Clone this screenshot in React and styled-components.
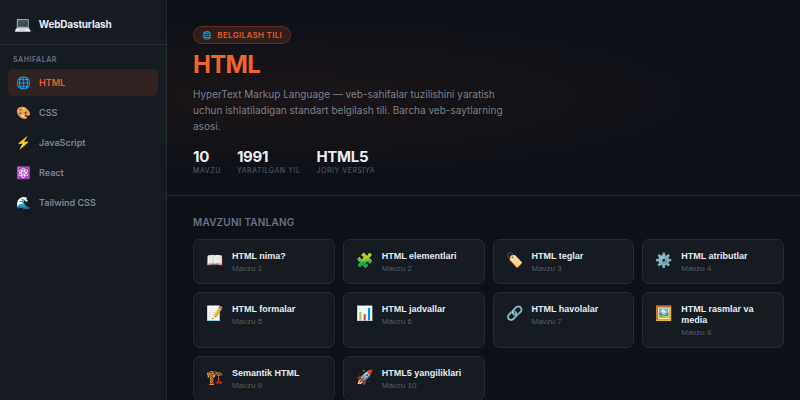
import { useState } from "react";
import styled, { createGlobalStyle } from "styled-components";

const pages = [
    { name: "HTML", icon: "🌐" },
    { name: "CSS", icon: "🎨" },
    { name: "JavaScript", icon: "⚡" },
    { name: "React", icon: "⚛️" },
    { name: "Tailwind CSS", icon: "🌊" },
];

const stats = [
    { value: "10", label: "Mavzu" },
    { value: "1991", label: "Yaratilgan yil" },
    { value: "HTML5", label: "Joriy versiya" },
];

const topics = [
    { title: "HTML nima?", icon: "📖" },
    { title: "HTML elementlari", icon: "🧩" },
    { title: "HTML teglar", icon: "🏷️" },
    { title: "HTML atributlar", icon: "⚙️" },
    { title: "HTML formalar", icon: "📝" },
    { title: "HTML jadvallar", icon: "📊" },
    { title: "HTML havolalar", icon: "🔗" },
    { title: "HTML rasmlar va media", icon: "🖼️" },
    { title: "Semantik HTML", icon: "🏗️" },
    { title: "HTML5 yangiliklari", icon: "🚀" },
];

const App = () => {
    const [active, setActive] = useState("HTML");

    return (
        <>
            <GlobalStyle />
            <Layout>
                <Sidebar>
                    <Logo>
                        <LogoIcon>💻</LogoIcon>
                        <span>WebDasturlash</span>
                    </Logo>
                    <Nav>
                        <NavTitle>Sahifalar</NavTitle>
                        {pages.map((page) => (
                            <NavItem
                                key={page.name}
                                type="button"
                                $active={page.name === active}
                                onClick={() => setActive(page.name)}
                            >
                                <NavIcon>{page.icon}</NavIcon>
                                {page.name}
                            </NavItem>
                        ))}
                    </Nav>
                </Sidebar>
                <Main>
                    <Hero>
                        <Badge>
                            <span>🌐</span>
                            <span>Belgilash tili</span>
                        </Badge>
                        <Title>HTML</Title>
                        <Description>
                            HyperText Markup Language — veb-sahifalar
                            tuzilishini yaratish uchun ishlatiladigan standart
                            belgilash tili. Barcha veb-saytlarning asosi.
                        </Description>
                        <Stats>
                            {stats.map((stat) => (
                                <div key={stat.label}>
                                    <StatValue>{stat.value}</StatValue>
                                    <StatLabel>{stat.label}</StatLabel>
                                </div>
                            ))}
                        </Stats>
                    </Hero>
                    <Topics>
                        <SectionTitle>Mavzuni tanlang</SectionTitle>
                        <TopicGrid>
                            {topics.map((topic, index) => (
                                <TopicCard key={topic.title} type="button">
                                    <TopicIcon>{topic.icon}</TopicIcon>
                                    <TopicText>
                                        <TopicName>{topic.title}</TopicName>
                                        <TopicNumber>
                                            Mavzu {index + 1}
                                        </TopicNumber>
                                    </TopicText>
                                </TopicCard>
                            ))}
                        </TopicGrid>
                    </Topics>
                </Main>
            </Layout>
        </>
    );
};

export default App;


const GlobalStyle = createGlobalStyle`
    * {
        box-sizing: border-box;
        margin: 0;
        padding: 0;
    }

    body {
        background-color: #0d1017;
        color: #e6edf3;
        font-family: Inter, "Liberation Sans", sans-serif;
    }
`;

const Layout = styled.div`
    display: flex;
    height: 100vh;
    overflow: hidden;
`;

const Sidebar = styled.aside`
    width: 167px;
    flex-shrink: 0;
    background-color: #161b22;
    border-right: 1px solid #262b33;
`;

const Logo = styled.div`
    display: flex;
    align-items: center;
    gap: 8px;
    height: 45px;
    padding: 3px 14px 0;
    border-bottom: 1px solid #262b33;
    font-size: 10px;
    font-weight: 700;
    letter-spacing: -0.02em;
`;

const LogoIcon = styled.span`
    font-size: 14px;
`;

const Nav = styled.nav`
    display: flex;
    flex-direction: column;
    gap: 3px;
    padding: 10px 8px;
`;

const NavTitle = styled.p`
    padding: 0 5px;
    margin-bottom: 1px;
    font-size: 7px;
    line-height: 10px;
    font-weight: 600;
    letter-spacing: 0.08em;
    text-transform: uppercase;
    color: #6b727b;
`;

const NavItem = styled.button`
    display: flex;
    align-items: center;
    gap: 8px;
    height: 27px;
    padding: 0 8px;
    border: none;
    border-radius: 5px;
    background-color: ${(props) =>
        props.$active ? "rgba(241, 101, 41, 0.12)" : "transparent"};
    color: ${(props) => (props.$active ? "#e8602a" : "#7d8590")};
    font-family: inherit;
    font-size: 9px;
    font-weight: 600;
    text-align: left;
    cursor: pointer;
`;

const NavIcon = styled.span`
    width: 15px;
    font-size: 12px;
    text-align: center;
`;

const Main = styled.main`
    flex: 1;
    min-width: 0;
    overflow: hidden;
`;

const Hero = styled.header`
    display: flex;
    flex-direction: column;
    align-items: flex-start;
    padding: 26px 26px 19px;
    border-bottom: 1px solid #262b33;
    background: radial-gradient(
        ellipse at 20% 50%,
        rgba(241, 101, 41, 0.06) 0%,
        transparent 60%
    );
`;

const Badge = styled.div`
    display: flex;
    align-items: center;
    gap: 5px;
    height: 18px;
    padding: 0 8px;
    margin-bottom: 6px;
    border: 1px solid rgba(241, 101, 41, 0.25);
    border-radius: 9px;
    background-color: rgba(241, 101, 41, 0.15);
    color: #e05c28;
    font-size: 8px;
    font-weight: 600;
    letter-spacing: 0.04em;
    text-transform: uppercase;
`;

const Title = styled.h1`
    margin-bottom: 6px;
    font-size: 24px;
    line-height: 30px;
    font-weight: 700;
    letter-spacing: -0.03em;
    color: #f16529;
`;

const Description = styled.p`
    max-width: 320px;
    margin-bottom: 14px;
    font-size: 10px;
    line-height: 16px;
    color: #7d8086;
`;

const Stats = styled.div`
    display: flex;
    gap: 16px;
`;

const StatValue = styled.div`
    font-size: 15px;
    line-height: 18px;
    font-weight: 700;
    letter-spacing: -0.02em;
`;

const StatLabel = styled.div`
    font-size: 7px;
    line-height: 10px;
    letter-spacing: 0.08em;
    text-transform: uppercase;
    color: #5a606a;
`;

const Topics = styled.section`
    padding: 20px 16px 20px 26px;
`;

const SectionTitle = styled.h2`
    margin-bottom: 11px;
    font-size: 10px;
    line-height: 12px;
    font-weight: 600;
    letter-spacing: 0.02em;
    text-transform: uppercase;
    color: #6b737e;
`;

const TopicGrid = styled.div`
    display: grid;
    grid-template-columns: repeat(auto-fill, minmax(134px, 1fr));
    gap: 8px;
`;

const TopicCard = styled.button`
    display: flex;
    align-items: flex-start;
    gap: 9px;
    padding: 11px 12px 10px;
    border: 1px solid #262b33;
    border-radius: 7px;
    background-color: #161b22;
    color: #e6edf3;
    font-family: "Liberation Sans", Arial, sans-serif;
    text-align: left;
    cursor: pointer;
`;

const TopicIcon = styled.span`
    font-size: 14px;
    line-height: 18px;
`;

const TopicText = styled.span`
    display: flex;
    flex-direction: column;
    gap: 2px;
`;

const TopicName = styled.span`
    font-size: 9px;
    line-height: 11px;
    font-weight: 700;
`;

const TopicNumber = styled.span`
    font-size: 8px;
    line-height: 9px;
    color: #565d67;
`;
